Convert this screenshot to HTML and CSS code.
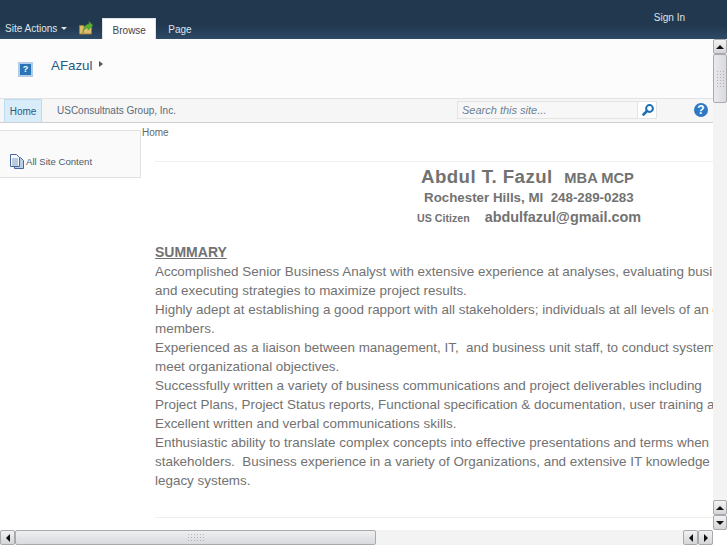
FILE: index.html
```html
<!DOCTYPE html>
<html lang="en">
<head>
  <meta charset="UTF-8">
  <title>AFazul - Home</title>
  <link rel="stylesheet" href="styles.css">
</head>
<body>
  <div class="ribbon">
    <div class="ribbon-left">
      <span class="site-actions">Site Actions <i class="caret-down"></i></span>
      <svg class="folder-icon" width="15" height="14" viewBox="0 0 15 14">
        <path d="M.5 4.500h4l1 1.500h7v7H.500z" fill="#dcbc6a" stroke="#9a7c3a"/>
        <path d="M4 12c0-3 2-5 5-5.500V9l5-4.500L10 .500V3C6 3.500 4 7 4 12z" fill="#58b032" stroke="#3c8a22" stroke-width=".5"/>
      </svg>
      <span class="tab tab-active">Browse</span>
      <span class="tab">Page</span>
    </div>
    <span class="sign-in">Sign In</span>
  </div>

  <div class="workspace">
    <div class="viewport">
      <div class="title-row">
        <div class="site-logo">?</div>
        <span class="site-title">AFazul</span>
        <i class="caret-right"></i>
      </div>

      <div class="topnav">
        <span class="nav-item nav-current">Home</span>
        <span class="nav-item">USConsultnats Group, Inc.</span>
        <div class="search-box">
          <span class="search-text">Search this site...</span>
          <span class="search-btn">
            <svg width="14" height="14" viewBox="0 0 14 14">
              <circle cx="8.500" cy="5.500" r="3.400" fill="none" stroke="#1c6fb5" stroke-width="2"/>
              <path d="M6 8l-3.500 3.500" stroke="#1c6fb5" stroke-width="2.600" stroke-linecap="round"/>
            </svg>
          </span>
        </div>
        <span class="help-icon">?</span>
      </div>

      <div class="main">
        <div class="sidebar">
          <div class="quick-launch">
            <svg width="14" height="15" viewBox="0 0 14 15">
              <path d="M4.500 3.500h6l3 3v8h-9z" fill="#b9cfe8" stroke="#46699a"/>
              <path d="M.5.500h6l3 3v9h-9z" fill="#f6f9fd" stroke="#46699a"/>
              <path d="M2 5h6M2 7h6M2 9h6M2 11h6" stroke="#7f9cc0"/>
            </svg>
            <span class="quick-label">All Site Content</span>
          </div>
        </div>
        <div class="content">
          <div class="breadcrumb">Home</div>
          <div class="page-body">
            <hr class="rule">
            <div class="contact">
              <div class="contact-name">Abdul T. Fazul <span class="contact-quals">MBA MCP</span></div>
              <div class="contact-line">Rochester Hills, MI&nbsp; 248-289-0283</div>
              <div class="contact-mail"><span class="citizen">US Citizen</span> abdulfazul@gmail.com</div>
            </div>
            <h2 class="section-head">SUMMARY</h2>
            <p class="line">Accomplished Senior Business Analyst with extensive experience at analyses, evaluating busi</p>
            <p class="line">and executing strategies to maximize project results.</p>
            <p class="line">Highly adept at establishing a good rapport with all stakeholders; individuals at all levels of an o</p>
            <p class="line">members.</p>
            <p class="line">Experienced as a liaison between management, IT,&nbsp; and business unit staff, to conduct system</p>
            <p class="line">meet organizational objectives.</p>
            <p class="line">Successfully written a variety of business communications and project deliverables including</p>
            <p class="line">Project Plans, Project Status reports, Functional specification &amp; documentation, user training an</p>
            <p class="line">Excellent written and verbal communications skills.</p>
            <p class="line">Enthusiastic ability to translate complex concepts into effective presentations and terms when</p>
            <p class="line">stakeholders.&nbsp; Business experience in a variety of Organizations, and extensive IT knowledge</p>
            <p class="line">legacy systems.</p>
            <hr class="rule rule-bottom">
          </div>
        </div>
      </div>
    </div>

    <div class="vscroll">
      <span class="sb-btn"><i class="arrow-up"></i></span>
      <div class="vthumb"><span class="grip"></span></div>
      <div class="sb-fill"></div>
      <span class="sb-btn"><i class="arrow-up"></i></span>
      <span class="sb-btn"><i class="arrow-down"></i></span>
    </div>
  </div>

  <div class="hscroll">
    <span class="sb-btn sb-btn-h"><i class="arrow-left"></i></span>
    <div class="hthumb"><span class="grip"></span></div>
    <div class="sb-fill"></div>
    <span class="sb-btn sb-btn-h"><i class="arrow-left"></i></span>
    <span class="sb-btn sb-btn-h"><i class="arrow-right"></i></span>
    <div class="sb-corner"></div>
  </div>
</body>
</html>
```

FILE: styles.css
```css
html, body {
  height: 100%;
}
body {
  margin: 0;
  font-family: "Liberation Sans", Arial, sans-serif;
  color: #727272;
  background: #fff;
  display: flex;
  flex-direction: column;
  overflow: hidden;
}
i {
  display: block;
  width: 0;
  height: 0;
}

/* ribbon */
.ribbon {
  height: 39px;
  flex: none;
  display: flex;
  justify-content: space-between;
  background: linear-gradient(#21384f, #21384f 65%, #2d4a66);
  color: #dfe4e9;
  font-size: 10px;
}
.ribbon-left {
  display: flex;
  align-items: flex-end;
}
.site-actions {
  display: flex;
  align-items: center;
  gap: 4px;
  margin: 0 0 5px 5px;
  height: 12px;
}
.caret-down {
  border: 3px solid transparent;
  border-top-color: #dfe4e9;
  border-bottom: 0;
}
.folder-icon {
  margin: 0 8px 4px 12px;
}
.tab {
  height: 15px;
  padding: 6px 11px 0 12px;
  text-align: center;
}
.tab-active {
  height: 18px;
  padding: 2px 0 0;
  width: 52px;
  background: #fff;
  color: #444;
  border: 1px solid #dfe3e6;
  border-bottom: 0;
  display: flex;
  align-items: center;
  justify-content: center;
}
.sign-in {
  margin: 12px 42px 0 0;
}

/* page frame */
.workspace {
  flex: 1;
  min-height: 0;
  display: flex;
}
.viewport {
  flex: 1;
  min-width: 0;
  overflow: hidden;
}
.title-row {
  height: 59px;
  display: flex;
  align-items: flex-start;
  background: #fcfcfc;
}
.site-logo {
  width: 11px;
  height: 11px;
  margin: 23px 0 0 18px;
  background: #2a74b8;
  border: 2px solid #b4cde6;
  color: #fff;
  font-size: 9px;
  font-weight: bold;
  line-height: 11px;
  text-align: center;
}
.site-title {
  margin: 19px 0 0 18px;
  font-size: 13.33px;
  color: #1f5b85;
}
.caret-right {
  margin: 22px 0 0 7px;
  border: 3px solid transparent;
  border-left: 4px solid #555;
  border-right: 0;
}

.topnav {
  height: 23px;
  display: flex;
  align-items: center;
  background: #f6f6f6;
  border-top: 1px solid #e2e2e2;
  border-bottom: 1px solid #cfcfcf;
  font-size: 10px;
}
.nav-item {
  margin-left: 15px;
  color: #5a6a7a;
}
.nav-current {
  margin-left: 4px;
  width: 38px;
  height: 23px;
  line-height: 23px;
  text-align: center;
  background: #d9ecfa;
  border: 1px solid #bcdcf2;
  border-bottom: 0;
  box-sizing: border-box;
  color: #2c5a80;
}
.search-box {
  margin: 0 0 2px auto;
  width: 198px;
  height: 16px;
  display: flex;
  background: #f7f7f7;
  border: 1px solid #e4e4e4;
}
.search-text {
  flex: 1;
  padding-left: 4px;
  font-size: 11px;
  font-style: italic;
  line-height: 16px;
  color: #6b7f93;
}
.search-btn {
  width: 19px;
  display: flex;
  align-items: center;
  justify-content: center;
  padding-left: 1px;
  box-sizing: border-box;
  background: #fff;
  border-left: 1px solid #e4e4e4;
}
.help-icon {
  width: 14px;
  height: 14px;
  margin: 0 5px 1px 37px;
  border-radius: 50%;
  background: #2f78c4;
  color: #fff;
  font-size: 12px;
  font-weight: bold;
  line-height: 14px;
  text-align: center;
}

.main {
  display: flex;
}
.sidebar {
  flex: none;
  width: 141px;
}
.quick-launch {
  height: 48px;
  margin-top: 7px;
  box-sizing: border-box;
  display: flex;
  align-items: flex-end;
  gap: 2px;
  padding: 0 0 8px 10px;
  background: #fafafa;
  border-top: 1px solid #e2e2e2;
  border-right: 1px solid #e2e2e2;
  border-bottom: 1px solid #e2e2e2;
  font-size: 9.6px;
  color: #4c5a6b;
}
.quick-label {
  margin-bottom: 2px;
}
.content {
  flex: 1;
  min-width: 0;
}
.breadcrumb {
  padding: 4px 0 0 1px;
  height: 18px;
  font-size: 10px;
  color: #666;
}
.page-body {
  padding-left: 14px;
}
.rule {
  margin: 0;
  height: 1px;
  border: 0;
  background: #eee;
  margin-top: 16px;
}
.rule-bottom {
  margin-top: 27px;
}
.contact {
  padding-top: 5px;
  font-weight: bold;
}
.contact-name {
  margin-left: 266px;
  font-size: 18.67px;
  letter-spacing: .45px;
  line-height: 20px;
}
.contact-quals {
  margin-left: 6px;
  font-size: 14.67px;
  letter-spacing: 0;
}
.contact-line {
  margin: 2px 0 0 269px;
  font-size: 13.33px;
  line-height: 16px;
}
.contact-mail {
  margin: 2px 0 0 262px;
  font-size: 14.4px;
  line-height: 18px;
}
.citizen {
  font-size: 10.67px;
  margin-right: 11px;
}
.section-head {
  margin: 16px 0 0;
  font-size: 14px;
  line-height: 19px;
  text-decoration: underline;
}
.line {
  margin: 0;
  font-size: 13.43px;
  line-height: 19px;
  white-space: nowrap;
}

/* fake scrollbars */
.vscroll {
  flex: none;
  width: 14px;
  display: flex;
  flex-direction: column;
  background: #f3f3f3;
}
.hscroll {
  flex: none;
  height: 15px;
  display: flex;
  background: #f3f3f3;
}
.sb-btn {
  flex: none;
  height: 15px;
  display: flex;
  align-items: center;
  justify-content: center;
  box-sizing: border-box;
  background: linear-gradient(#f2f2f4, #d4d5d8);
  border: 1px solid #a9aaac;
  border-radius: 2px;
}
.sb-btn-h {
  height: 15px;
  width: 15px;
}
.sb-fill {
  flex: 1;
}
.sb-corner {
  flex: none;
  width: 14px;
  background: #fff;
}
.vthumb {
  height: 49px;
  flex: none;
  display: flex;
  align-items: center;
  justify-content: center;
  box-sizing: border-box;
  background: linear-gradient(90deg, #e9eaed, #d9dadd);
  border: 1px solid #a9aaac;
  border-radius: 2px;
}
.hthumb {
  width: 361px;
  flex: none;
  display: flex;
  align-items: center;
  justify-content: center;
  box-sizing: border-box;
  background: linear-gradient(#eeeff1, #d9dadd);
  border: 1px solid #a9aaac;
  border-radius: 2px;
}
.grip {
  width: 17px;
  height: 9px;
  background-image: radial-gradient(#b0b0b0 35%, transparent 40%);
  background-size: 3px 3px;
}
.vthumb .grip {
  width: 9px;
  height: 17px;
}
.arrow-up {
  border: 4px solid transparent;
  border-bottom: 4px solid #111;
  border-top: 0;
}
.arrow-down {
  border: 4px solid transparent;
  border-top: 4px solid #111;
  border-bottom: 0;
}
.arrow-left {
  border: 4px solid transparent;
  border-right: 4px solid #111;
  border-left: 0;
}
.arrow-right {
  border: 4px solid transparent;
  border-left: 4px solid #111;
  border-right: 0;
}
```
